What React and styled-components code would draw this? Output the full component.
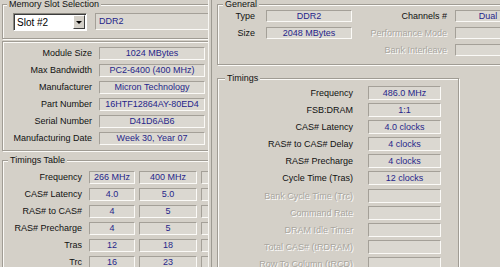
import React from 'react';
import styled, { createGlobalStyle } from 'styled-components';

const GlobalStyle = createGlobalStyle`
  html, body {
    margin: 0;
    padding: 0;
    background: #d4d0c8;
  }
  body {
    font-family: "Liberation Sans", Arial, sans-serif;
    font-size: 9px;
    color: #111111;
  }
`;

const Window = styled.div`
  width: 500px;
  height: 267px;
  overflow: hidden;
  display: flex;
  background: #d4d0c8;
`;

const LeftPane = styled.div`
  width: 208px;
  flex: none;
  box-sizing: border-box;
  padding-left: 2px;
  overflow: hidden;
  display: flex;
  flex-direction: column;
`;

const Divider = styled.div`
  width: 4px;
  flex: none;
  box-sizing: border-box;
  border-left: 1px solid #f7f6f2;
  border-right: 1px solid #9d9a92;
`;

const RightPane = styled.div`
  flex: 1;
  overflow: hidden;
  padding-left: 5px;
  display: flex;
  flex-direction: column;
`;

// etched windows group box
const Group = styled.div`
  position: relative;
  flex: none;
  box-sizing: border-box;
  width: ${(p) => p.$width}px;
  height: ${(p) => p.$height}px;
  margin-top: ${(p) => p.$gap}px;
  border: 1px solid #a09c94;
  box-shadow: inset 1px 1px 0 #fbfaf7, 1px 1px 0 #fbfaf7;
`;

const Legend = styled.span`
  position: absolute;
  top: -7px;
  left: ${(p) => p.$x}px;
  padding: 0 2px;
  line-height: 12px;
  background: #d4d0c8;
  color: #111111;
  white-space: nowrap;
`;

const SlotRow = styled.div`
  display: flex;
  gap: 8px;
  padding: 8px 0 0 10px;
`;

const Combo = styled.div`
  width: 74px;
  height: 18px;
  flex: none;
  box-sizing: border-box;
  display: flex;
  align-items: center;
  padding: 0 1px 0 3px;
  background: #ffffff;
  border: 1px solid;
  border-color: #8a877f #ffffff #ffffff #8a877f;
  box-shadow: inset 1px 1px 0 #3c3c3c;
  font-size: 10px;
  color: #000000;
`;

const DropButton = styled.div`
  margin-left: auto;
  width: 12px;
  height: 14px;
  box-sizing: border-box;
  display: flex;
  align-items: center;
  justify-content: center;
  background: #d4d0c8;
  border: 1px solid;
  border-color: #ffffff #404040 #404040 #ffffff;

  &::after {
    content: '';
    border-left: 3px solid transparent;
    border-right: 3px solid transparent;
    border-top: 3px solid #000000;
  }
`;

const Field = styled.div`
  box-sizing: border-box;
  width: ${(p) => (p.$w ? `${p.$w}px` : 'auto')};
  height: ${(p) => (p.$h ? `${p.$h}px` : 'auto')};
  line-height: ${(p) => (p.$h ? p.$h - 2 : 11)}px;
  padding: 0 3px;
  text-align: ${(p) => p.$align || 'center'};
  white-space: nowrap;
  overflow: hidden;
  background: #dbd8d1;
  border: 1px solid;
  border-color: #a4a098 #fbfaf7 #fbfaf7 #a4a098;
  color: #26268a;
`;

const Label = styled.div`
  text-align: right;
  white-space: nowrap;
  padding-right: ${(p) => p.$pad || 0}px;
  line-height: ${(p) => p.$h || 13}px;
  color: ${(p) => (p.$off ? '#a9a69f' : '#111111')};
  text-shadow: ${(p) => (p.$off ? '1px 1px 0 #ffffff' : 'none')};
`;

const InfoGrid = styled.div`
  display: grid;
  grid-template-columns: 89px 106px;
  grid-auto-rows: 13px;
  column-gap: 7px;
  row-gap: 4px;
  padding-top: 5px;
`;

const TableGrid = styled.div`
  display: grid;
  grid-template-columns: 82px 46px 58px 40px;
  grid-auto-rows: 13px;
  column-gap: 4px;
  row-gap: 4px;
  padding-top: 10px;
`;

const GeneralGrid = styled.div`
  display: grid;
  grid-template-columns: 48px 86px 103px 66px;
  grid-auto-rows: 12px;
  row-gap: 5px;
  padding-top: 5px;
`;

const TimingsGrid = styled.div`
  display: grid;
  grid-template-columns: 150px 73px;
  grid-auto-rows: 14px;
  row-gap: 3.1px;
  padding-top: 7px;
`;

const moduleInfo = [
  ['Module Size', '1024 MBytes'],
  ['Max Bandwidth', 'PC2-6400 (400 MHz)'],
  ['Manufacturer', 'Micron Technology'],
  ['Part Number', '16HTF12864AY-80ED4'],
  ['Serial Number', 'D41D6AB6'],
  ['Manufacturing Date', 'Week 30, Year 07'],
];

const timingsTable = [
  ['Frequency', '266 MHz', '400 MHz'],
  ['CAS# Latency', '4.0', '5.0'],
  ['RAS# to CAS#', '4', '5'],
  ['RAS# Precharge', '4', '5'],
  ['Tras', '12', '18'],
  ['Trc', '16', '23'],
];

const timings = [
  ['Frequency', '486.0 MHz'],
  ['FSB:DRAM', '1:1'],
  ['CAS# Latency', '4.0 clocks'],
  ['RAS# to CAS# Delay', '4 clocks'],
  ['RAS# Precharge', '4 clocks'],
  ['Cycle Time (Tras)', '12 clocks'],
  ['Bank Cycle Time (Trc)', null],
  ['Command Rate', null],
  ['DRAM Idle Timer', null],
  ['Total CAS# (tRDRAM)', null],
  ['Row To Column (tRCD)', null],
];

function SpdPanel() {
  return (
    <LeftPane>
      <Group $width={215} $height={35} $gap={4}>
        <Legend $x={4}>Memory Slot Selection</Legend>
        <SlotRow>
          <Combo>
            Slot #2
            <DropButton />
          </Combo>
          <Field $w={120} $h={17} $align="left">DDR2</Field>
        </SlotRow>
      </Group>

      <Group $width={215} $height={110} $gap={2}>
        <InfoGrid>
          {moduleInfo.map(([label, value]) => (
            <React.Fragment key={label}>
              <Label>{label}</Label>
              <Field $h={13}>{value}</Field>
            </React.Fragment>
          ))}
        </InfoGrid>
      </Group>

      <Group $width={215} $height={130} $gap={9}>
        <Legend $x={5}>Timings Table</Legend>
        <TableGrid>
          {timingsTable.map(([label, a, b]) => (
            <React.Fragment key={label}>
              <Label $pad={3}>{label}</Label>
              <Field $h={13}>{a}</Field>
              <Field $h={13}>{b}</Field>
              <Field $h={13} />
            </React.Fragment>
          ))}
        </TableGrid>
      </Group>
    </LeftPane>
  );
}

function MemoryPanel() {
  return (
    <RightPane>
      <Group $width={320} $height={61} $gap={4}>
        <Legend $x={5}>General</Legend>
        <GeneralGrid>
          <Label $h={12} $pad={11}>Type</Label>
          <Field $h={12}>DDR2</Field>
          <Label $h={12} $pad={8}>Channels #</Label>
          <Field $h={12}>Dual</Field>

          <Label $h={12} $pad={11}>Size</Label>
          <Field $h={12}>2048 MBytes</Field>
          <Label $h={12} $pad={8} $off>Performance Mode</Label>
          <Field $h={12} />

          <span />
          <span />
          <Label $h={12} $pad={8} $off>Bank Interleave</Label>
          <Field $h={12} />
        </GeneralGrid>
      </Group>

      <Group $width={242} $height={210} $gap={13}>
        <Legend $x={7}>Timings</Legend>
        <TimingsGrid>
          {timings.map(([label, value]) => (
            <React.Fragment key={label}>
              <Label $h={14} $pad={15} $off={value === null}>{label}</Label>
              <Field $h={14}>{value}</Field>
            </React.Fragment>
          ))}
        </TimingsGrid>
      </Group>
    </RightPane>
  );
}

export default function App() {
  return (
    <>
      <GlobalStyle />
      <Window>
        <SpdPanel />
        <Divider />
        <MemoryPanel />
      </Window>
    </>
  );
}
